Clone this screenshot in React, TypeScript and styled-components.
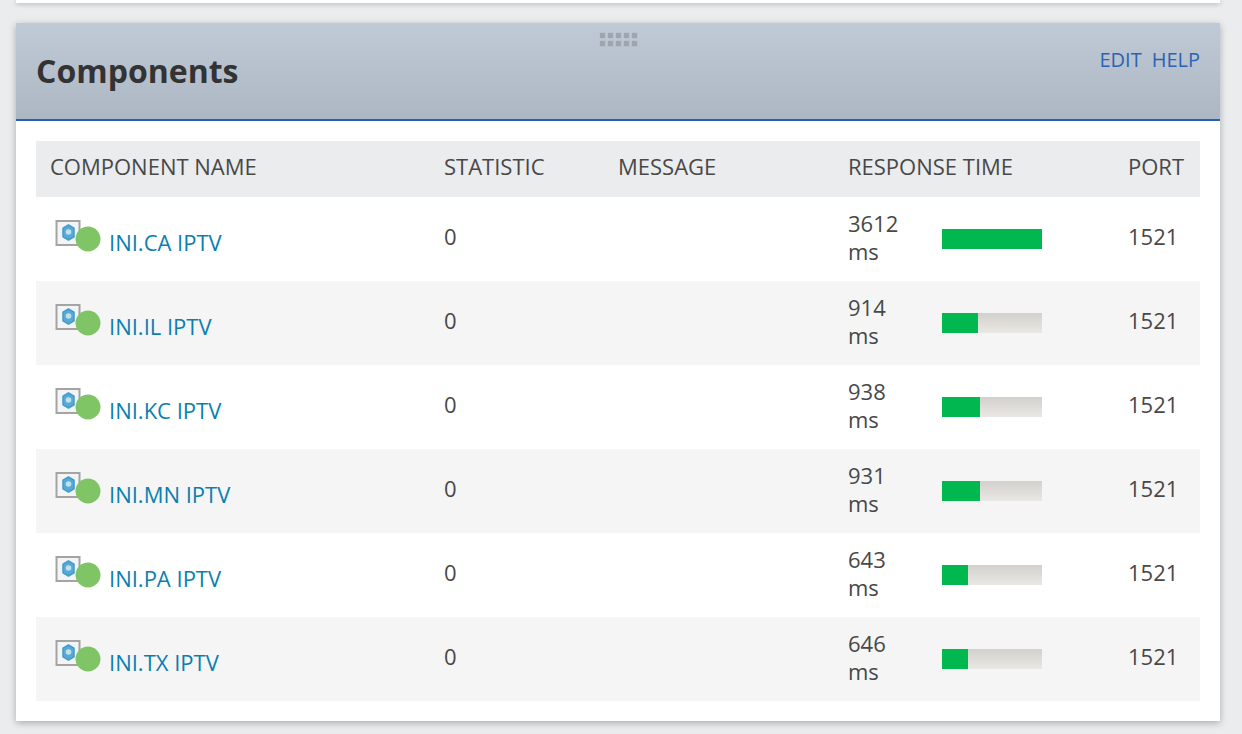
import React from "react";
import styled, { createGlobalStyle } from "styled-components";

const GlobalStyle = createGlobalStyle`
  html, body {
    margin: 0;
    padding: 0;
    height: 734px;
    overflow: hidden;
    background: #ebecee;
    font-family: "Open Sans", "Liberation Sans", sans-serif;
  }
`;

const Page = styled.div`
  padding: 0 22px 0 16px;
  display: flex;
  flex-direction: column;
  gap: 20px;
`;

const TopCard = styled.div`
  height: 3px;
  background: #fff;
  box-shadow: 0 1px 5px rgba(0, 0, 0, 0.28);
`;

const Panel = styled.section`
  background: #fff;
  box-shadow: 0 2px 7px rgba(0, 0, 0, 0.28);
`;

const PanelHeader = styled.header`
  position: relative;
  height: 98px;
  box-sizing: border-box;
  padding: 26px 20px 0 20px;
  display: flex;
  justify-content: space-between;
  align-items: flex-start;
  background: linear-gradient(#c0cad7, #adb6c3);
  border-bottom: 2px solid #2560b4;
`;

const Title = styled.h2`
  margin: 0;
  font-size: 32px;
  line-height: 44px;
  font-weight: 700;
  color: #333;
`;

const HeaderLinks = styled.div`
  display: flex;
  gap: 10px;
  margin-top: -3px;
`;

const HeaderLink = styled.a`
  font-size: 20px;
  line-height: 28px;
  color: #2a63b4;
`;

const DragHandle = styled.div`
  position: absolute;
  top: 10px;
  left: 584px;
  display: grid;
  grid-template-columns: repeat(5, 5px);
  gap: 3px;
`;

const DragDot = styled.span`
  width: 5px;
  height: 5px;
  background: #9fa5ad;
  box-shadow: 0 0 1px #9fa5ad;
`;

const PanelBody = styled.div`
  padding: 20px;
`;

const Table = styled.table`
  width: 100%;
  border-collapse: collapse;
  table-layout: fixed;
  font-size: 22px;
  line-height: 28px;
  color: #484848;
`;

const HeadCell = styled.th`
  height: 56px;
  padding: 0 0 7px 14px;
  box-sizing: border-box;
  text-align: left;
  font-weight: 400;
  background: #ebecee;
  color: #484848;
  white-space: nowrap;
`;

const Row = styled.tr`
  &:nth-child(even) {
    background: #f5f5f5;
  }
`;

const Cell = styled.td`
  height: 84px;
  padding: 0 0 6px 14px;
  box-sizing: border-box;
  vertical-align: middle;
`;

const NameWrap = styled.div`
  display: flex;
  align-items: flex-end;
  gap: 8px;
  margin: 0 0 0 5px;
`;

const NameLink = styled.a`
  color: #0a7fb0;
  line-height: 28px;
  margin-bottom: -4px;
`;

const TimeWrap = styled.div`
  display: flex;
  align-items: center;
  margin-bottom: -6px;
`;

const TimeText = styled.span`
  width: 60px;
  margin-right: 34px;
  margin-top: -4px;
`;

const BarTrack = styled.div`
  width: 100px;
  height: 20px;
  background: linear-gradient(#d1d0cb, #e9e8e5);
`;

const BarFill = styled.div`
  height: 100%;
  background: #00b84f;
`;

const StatusIcon = () => (
  <svg width="46" height="32" viewBox="0 0 46 32" style={{ filter: "blur(0.7px)", flex: "none" }}>
    <rect x="1.500" y="1" width="23" height="24" fill="#f2f4f5" stroke="#a4a4a4" strokeWidth="2" />
    <path
      d="M13.500 5l5.500 3.200v8.600l-5.500 3.200-5.500-3.200v-8.600z"
      fill="#58a9d3"
      stroke="#3f9ccb"
      strokeWidth="1.500"
      strokeLinejoin="round"
    />
    <circle cx="13.500" cy="12" r="2.800" fill="#bfe0f0" />
    <circle cx="33" cy="19" r="12.500" fill="#7fc566" />
  </svg>
);

const rows = [
  { name: "INI.CA IPTV", time: 3612, pct: 100 },
  { name: "INI.IL IPTV", time: 914, pct: 36 },
  { name: "INI.KC IPTV", time: 938, pct: 38 },
  { name: "INI.MN IPTV", time: 931, pct: 38 },
  { name: "INI.PA IPTV", time: 643, pct: 26 },
  { name: "INI.TX IPTV", time: 646, pct: 26 },
];

export default function App() {
  return (
    <Page>
      <GlobalStyle />
      <TopCard />
      <Panel>
        <PanelHeader>
          <DragHandle>
            {Array.from({ length: 10 }).map((_, i) => (
              <DragDot key={i} />
            ))}
          </DragHandle>
          <Title>Components</Title>
          <HeaderLinks>
            <HeaderLink>EDIT</HeaderLink>
            <HeaderLink>HELP</HeaderLink>
          </HeaderLinks>
        </PanelHeader>
        <PanelBody>
          <Table>
            <colgroup>
              <col style={{ width: 394 }} />
              <col style={{ width: 174 }} />
              <col style={{ width: 230 }} />
              <col style={{ width: 280 }} />
              <col style={{ width: 86 }} />
            </colgroup>
            <thead>
              <tr>
                <HeadCell>COMPONENT NAME</HeadCell>
                <HeadCell>STATISTIC</HeadCell>
                <HeadCell>MESSAGE</HeadCell>
                <HeadCell>RESPONSE TIME</HeadCell>
                <HeadCell>PORT</HeadCell>
              </tr>
            </thead>
            <tbody>
              {rows.map(row => (
                <Row key={row.name}>
                  <Cell>
                    <NameWrap>
                      <StatusIcon />
                      <NameLink>{row.name}</NameLink>
                    </NameWrap>
                  </Cell>
                  <Cell>0</Cell>
                  <Cell />
                  <Cell>
                    <TimeWrap>
                      <TimeText>{row.time} ms</TimeText>
                      <BarTrack>
                        <BarFill style={{ width: `${row.pct}%` }} />
                      </BarTrack>
                    </TimeWrap>
                  </Cell>
                  <Cell>1521</Cell>
                </Row>
              ))}
            </tbody>
          </Table>
        </PanelBody>
      </Panel>
    </Page>
  );
}
